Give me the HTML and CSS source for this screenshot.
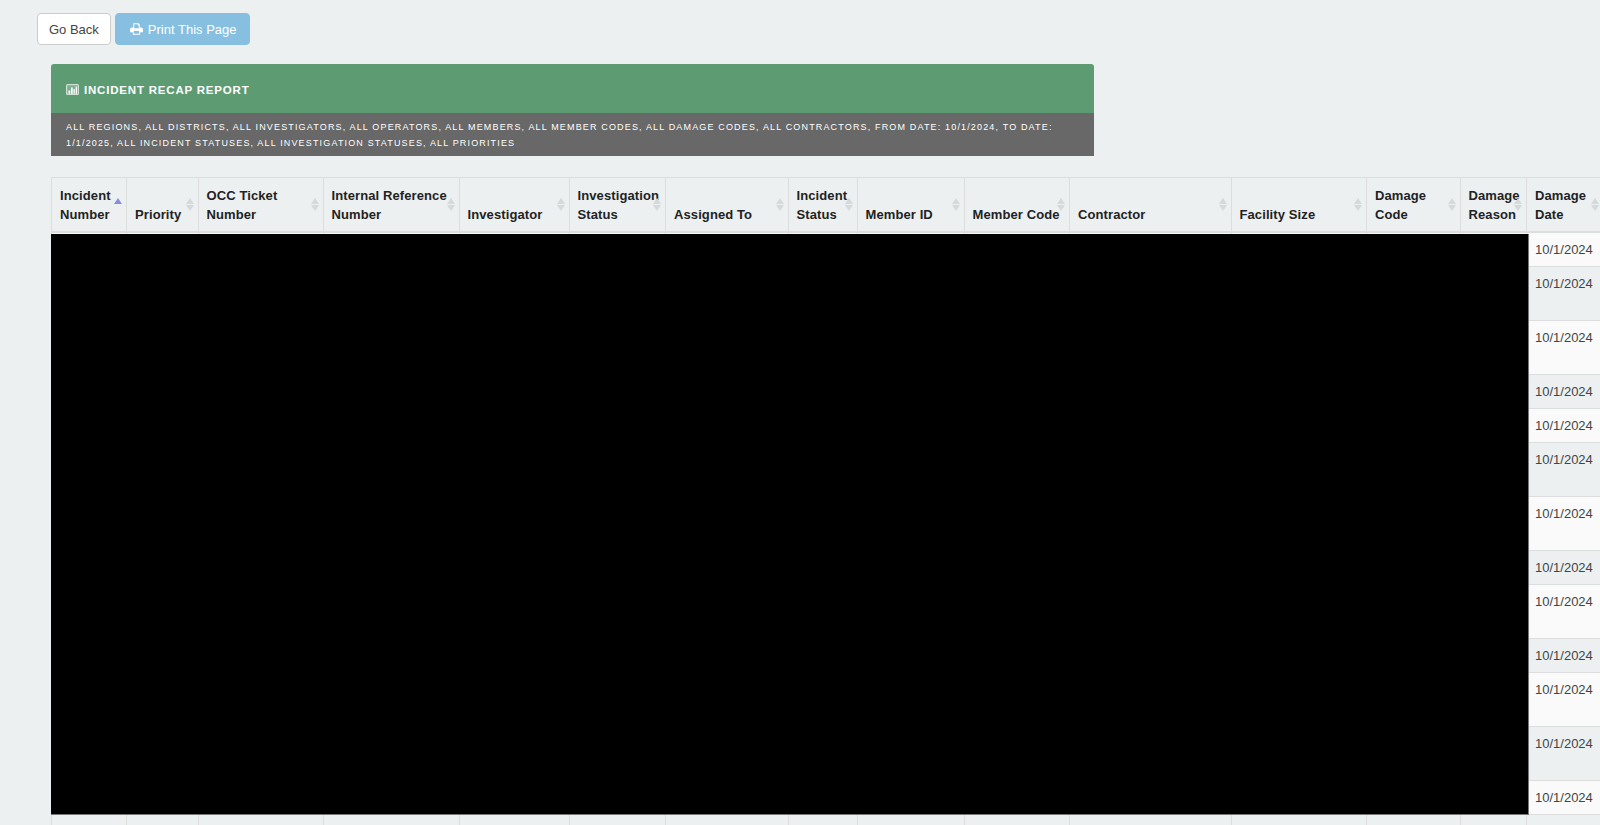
FILE: index.html
```html
<!doctype html>
<html>
  <head>
    <title>Incident Recap Report</title>
    <link rel="stylesheet" href="styles.css">
  </head>
  <body>
    <div class="button-row">
      <button class="btn btn-back">Go Back</button>
      <button class="btn btn-print">
        <svg class="print-icon" viewBox="0 0 16 14"><path fill="currentColor" fill-rule="evenodd" d="M4 0h6.500L12 1.500V5h1.500A2.500 2.500 0 0 1 16 7.500V11h-3.500v3h-9v-3H0V7.500A2.500 2.500 0 0 1 2.500 5H4zM5.200 1.200V6h5.600V2.800H9.500V1.200zM4.700 9.500v3.300h6.600V9.500z"/></svg>
        Print This Page
      </button>
    </div>

    <div class="panel">
      <div class="panel-title">
        <svg class="chart-icon" viewBox="0 0 13 11">
          <rect width="13" height="11" rx="1.500" fill="#cfe0d5"/>
          <rect x="1.200" y="1.200" width="10.600" height="8.600" fill="#7fae8f"/>
          <path fill="#fff" d="M2.500 6.500h1.700v3.300H2.500zM5 3.500h1.700v6.300H5zM7.500 5h1.300v4.800H7.500zM9.700 2.500h1.300v7.300H9.700z"/>
        </svg>
        INCIDENT RECAP REPORT
      </div>
      <div class="panel-filters">ALL REGIONS, ALL DISTRICTS, ALL INVESTIGATORS, ALL OPERATORS, ALL MEMBERS, ALL MEMBER CODES, ALL DAMAGE CODES, ALL CONTRACTORS, FROM DATE: 10/1/2024, TO DATE: 1/1/2025, ALL INCIDENT STATUSES, ALL INVESTIGATION STATUSES, ALL PRIORITIES</div>
    </div>

    <div class="table-wrap">
      <table class="report-table">
        <thead>
          <tr>
            <th class="w-incident sorted">Incident Number</th>
            <th class="w-priority">Priority</th>
            <th class="w-occ">OCC Ticket Number</th>
            <th class="w-internal">Internal Reference Number</th>
            <th class="w-investigator">Investigator</th>
            <th class="w-inv-status">Investigation Status</th>
            <th class="w-assigned">Assigned To</th>
            <th class="w-status">Incident Status</th>
            <th class="w-member-id">Member ID</th>
            <th class="w-member-code">Member Code</th>
            <th class="w-contractor">Contractor</th>
            <th class="w-facility">Facility Size</th>
            <th class="w-code">Damage Code</th>
            <th class="w-reason">Damage Reason</th>
            <th class="w-date">Damage Date</th>
          </tr>
        </thead>
        <tbody id="rows"></tbody>
      </table>
      <div class="redacted"></div>
    </div>

    <script>
      // 1 = single line row, 2 = row with wrapped text, 0 = row cut off by the window
      const rowLines = [1, 2, 2, 1, 1, 2, 2, 1, 2, 1, 2, 2, 1, 0];
      const rowClasses = ['peek', 'short', 'tall'];
      const tbody = document.getElementById('rows');
      rowLines.forEach(lines => {
        const tr = document.createElement('tr');
        tr.className = rowClasses[lines];
        for (let i = 0; i < 14; i++) {
          tr.appendChild(document.createElement('td'));
        }
        const date = document.createElement('td');
        if (lines > 0) {
          date.textContent = '10/1/2024';
        }
        tr.appendChild(date);
        tbody.appendChild(tr);
      });
    </script>
  </body>
</html>
```

FILE: styles.css
```css
html, body {
  height: 825px;
  overflow: hidden;
}
body {
  margin: 0;
  padding: 13px 0 0 37px;
  font-family: "Liberation Sans", Arial, sans-serif;
  font-size: 13px;
  color: #333;
  background-color: #ecf0f1;
}
.button-row {
  display: flex;
  gap: 4px;
}
.btn {
  height: 32px;
  padding: 0 11px;
  border: 1px solid #ccc;
  border-radius: 4px;
  font-family: inherit;
  font-size: 13px;
  color: #444;
  background-color: #fff;
}
.btn-print {
  display: flex;
  align-items: center;
  gap: 5px;
  padding: 0 12px 0 14px;
  border-color: #86bfe0;
  color: #fff;
  background-color: #86bfe0;
}
.print-icon {
  width: 13px;
  height: 12px;
}
.panel {
  width: 1043px;
  margin: 19px 0 0 14px;
  border-radius: 3px 3px 0 0;
  overflow: hidden;
}
.panel-title {
  display: flex;
  align-items: center;
  gap: 5px;
  height: 49px;
  box-sizing: border-box;
  padding: 2px 15px 0;
  font-size: 11.5px;
  font-weight: bold;
  letter-spacing: 0.8px;
  color: #fff;
  background-color: #5d9b73;
}
.chart-icon {
  width: 13px;
  height: 11px;
}
.panel-filters {
  height: 43px;
  box-sizing: border-box;
  padding: 6px 30px 0 15px;
  font-size: 9px;
  line-height: 16px;
  letter-spacing: 1.155px;
  color: #fff;
  background-color: #686868;
}
.table-wrap {
  position: relative;
  width: 1600px;
  margin: 21px 0 0 14px;
}
.report-table {
  table-layout: fixed;
  width: 1552px;
  border-collapse: collapse;
}
.report-table th {
  position: relative;
  height: 54px;
  box-sizing: border-box;
  padding: 8px 8px 7px;
  border: 1px solid #ddd;
  border-bottom-width: 2px;
  vertical-align: bottom;
  text-align: left;
  line-height: 19px;
  letter-spacing: 0.1px;
  color: #222;
}
.report-table th::before, .report-table th::after {
  content: "";
  position: absolute;
  right: 4px;
  border-left: 4px solid transparent;
  border-right: 4px solid transparent;
}
.report-table th::before {
  top: 20px;
  border-bottom: 6px solid #d5d9dc;
}
.report-table th::after {
  top: 27px;
  border-top: 6px solid #d5d9dc;
}
.report-table th.sorted::before {
  border-bottom-color: #8b8be0;
}
.report-table th.sorted::after {
  display: none;
}
.report-table td {
  box-sizing: border-box;
  padding: 8px;
  border: 1px solid #ddd;
  vertical-align: top;
  line-height: 17px;
  white-space: nowrap;
  color: #444;
}
.report-table tr:nth-child(odd) td {
  background-color: #fafafa;
}
.report-table tr.short {
  height: 34px;
}
.report-table tr.tall {
  height: 54px;
}
.report-table tr.peek td {
  height: 12px;
  padding: 0;
}
.w-incident { width: 75px; }
.w-priority { width: 71.500px; }
.w-occ { width: 125px; }
.w-internal { width: 136px; }
.w-investigator { width: 110px; }
.w-inv-status { width: 96.500px; }
.w-assigned { width: 122.500px; }
.w-status { width: 69px; }
.w-member-id { width: 107px; }
.w-member-code { width: 105.500px; }
.w-contractor { width: 161.500px; }
.w-facility { width: 135.500px; }
.w-code { width: 93.500px; }
.w-reason { width: 66.500px; }
.w-date { width: 77px; }
.redacted {
  position: absolute;
  top: 57px;
  left: 0;
  width: 1478px;
  height: 581px;
  border: solid #777;
  border-width: 0 1px 1px 0;
  box-sizing: border-box;
  background-color: #000;
}
```
